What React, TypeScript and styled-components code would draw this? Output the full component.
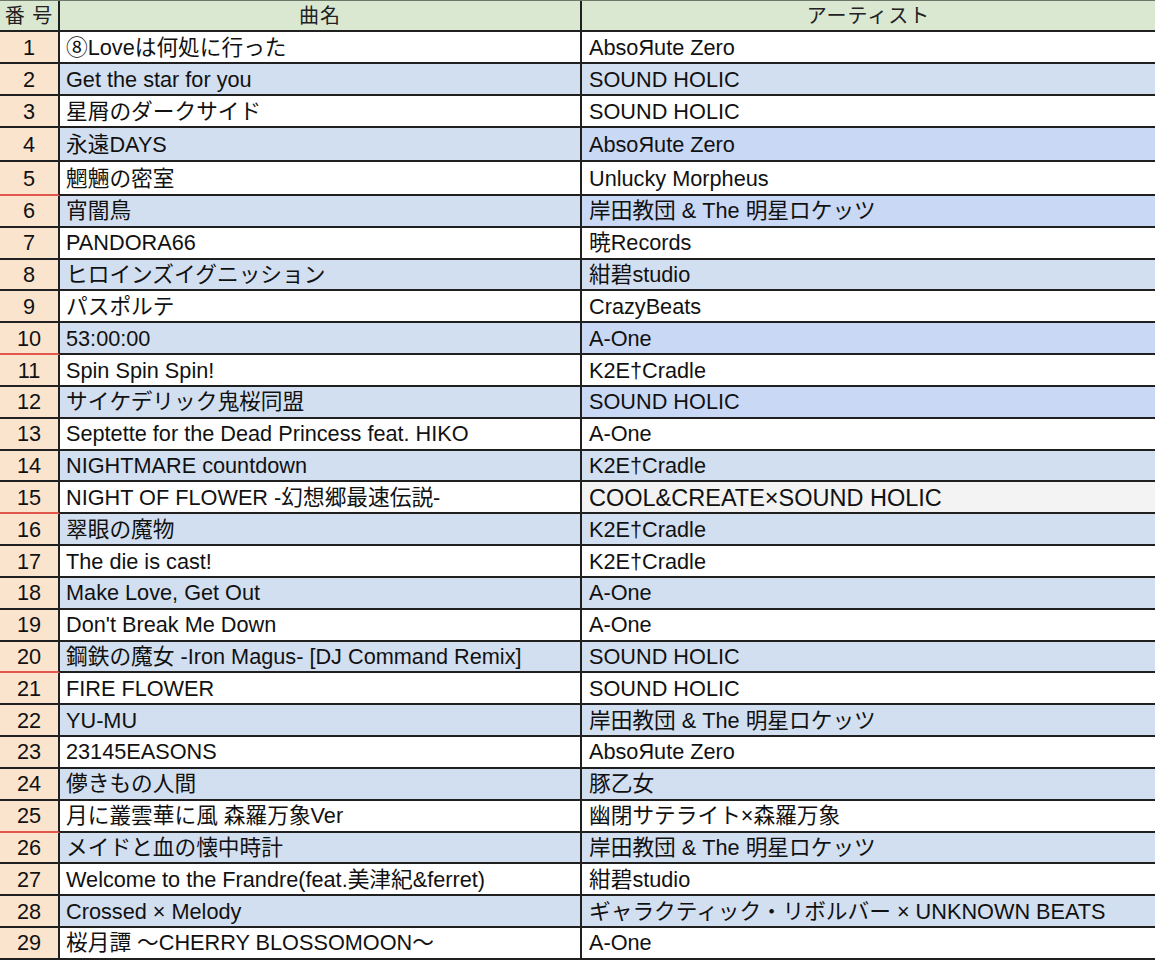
import styled, { createGlobalStyle } from 'styled-components';

const GlobalStyle = createGlobalStyle`
  html, body {
    margin: 0;
    padding: 0;
    background: #ffffff;
    overflow: hidden;
  }
  body {
    font-family: 'Liberation Sans', 'Noto Sans CJK JP', sans-serif;
    color: #111;
  }
`;

const LINE = '#202020';

const Sheet = styled.div`
  width: 1175px;
  border-top: 1px solid #6d7868;
`;

const Row = styled.div<{ $h: number }>`
  display: grid;
  grid-template-columns: 60px 522px 1fr;
  height: ${(p) => p.$h}px;
`;

const Cell = styled.div`
  display: flex;
  align-items: center;
  box-sizing: border-box;
  padding-top: 1px;
  border-right: 2px solid ${LINE};
  border-bottom: 2px solid ${LINE};
  white-space: nowrap;
  overflow: hidden;
  font-size: 21.7px;
  line-height: 24px;
`;

const Text = styled.span`
  display: block;
  height: 24px;
  line-height: 24px;
`;

const HeadCell = styled(Cell)<{ $last?: boolean }>`
  justify-content: center;
  padding-top: 0;
  padding-right: ${(p) => (p.$last ? '20px' : '0')};
  border-right: ${(p) => (p.$last ? 'none' : `2px solid ${LINE}`)};
  background: #dae8d2;
  font-size: 20px;
  color: #222;
  letter-spacing: 1px;
`;

const NumCell = styled(Cell)<{ $mark: boolean }>`
  justify-content: center;
  background: #fae4cd;
  border-bottom-color: ${(p) => (p.$mark ? '#e2574c' : LINE)};
`;

const TitleCell = styled(Cell)<{ $blue: boolean }>`
  padding-left: 6px;
  background: ${(p) => (p.$blue ? '#d2dff0' : '#ffffff')};
`;

const ArtistCell = styled(Cell)<{ $bg: string; $big: boolean }>`
  padding-left: 7px;
  border-right: none;
  background: ${(p) => p.$bg};
  font-size: ${(p) => (p.$big ? '23.5px' : '21.7px')};
`;

const songs: [string, string][] = [
  ['⑧Loveは何処に行った', 'AbsoЯute Zero'],
  ['Get the star for you', 'SOUND HOLIC'],
  ['星屑のダークサイド', 'SOUND HOLIC'],
  ['永遠DAYS', 'AbsoЯute Zero'],
  ['魍魎の密室', 'Unlucky Morpheus'],
  ['宵闇鳥', '岸田教団 & The 明星ロケッツ'],
  ['PANDORA66', '暁Records'],
  ['ヒロインズイグニッション', '紺碧studio'],
  ['パスポルテ', 'CrazyBeats'],
  ['53:00:00', 'A-One'],
  ['Spin Spin Spin!', 'K2E†Cradle'],
  ['サイケデリック鬼桜同盟', 'SOUND HOLIC'],
  ['Septette for the Dead Princess feat. HIKO', 'A-One'],
  ['NIGHTMARE countdown', 'K2E†Cradle'],
  ['NIGHT OF FLOWER -幻想郷最速伝説-', 'COOL&CREATE×SOUND HOLIC'],
  ['翠眼の魔物', 'K2E†Cradle'],
  ['The die is cast!', 'K2E†Cradle'],
  ['Make Love, Get Out', 'A-One'],
  ["Don't Break Me Down", 'A-One'],
  ['鋼鉄の魔女 -Iron Magus- [DJ Command Remix]', 'SOUND HOLIC'],
  ['FIRE FLOWER', 'SOUND HOLIC'],
  ['YU-MU', '岸田教団 & The 明星ロケッツ'],
  ['23145EASONS', 'AbsoЯute Zero'],
  ['儚きもの人間', '豚乙女'],
  ['月に叢雲華に風 森羅万象Ver', '幽閉サテライト×森羅万象'],
  ['メイドと血の懐中時計', '岸田教団 & The 明星ロケッツ'],
  ['Welcome to the Frandre(feat.美津紀&ferret)', '紺碧studio'],
  ['Crossed × Melody', 'ギャラクティック・リボルバー × UNKNOWN BEATS'],
  ['桜月譚 〜CHERRY BLOSSOMOON〜', 'A-One'],
];

// rows whose artist cell uses the stronger blue
const strongBlue = [4, 6, 10, 12];

function rowHeight(n: number) {
  if (n <= 3) return 32;
  if (n === 4 || n === 5) return 34;
  return 31.83;
}

function artistBg(n: number) {
  if (n === 15) return '#f3f3f3';
  if (n % 2 === 1) return '#ffffff';
  return strongBlue.includes(n) ? '#c9d8f4' : '#d2dff0';
}

function App() {
  return (
    <>
      <GlobalStyle />
      <Sheet>
        <Row $h={31}>
          <HeadCell>番 号</HeadCell>
          <HeadCell>曲名</HeadCell>
          <HeadCell $last>アーティスト</HeadCell>
        </Row>
        {songs.map(([title, artist], i) => {
          const n = i + 1;
          return (
            <Row key={n} $h={rowHeight(n)}>
              <NumCell $mark={n % 5 === 0}>
                <Text>{n}</Text>
              </NumCell>
              <TitleCell $blue={n % 2 === 0}>
                <Text>{title}</Text>
              </TitleCell>
              <ArtistCell $bg={artistBg(n)} $big={n === 15}>
                <Text>{artist}</Text>
              </ArtistCell>
            </Row>
          );
        })}
      </Sheet>
    </>
  );
}

export default App;
